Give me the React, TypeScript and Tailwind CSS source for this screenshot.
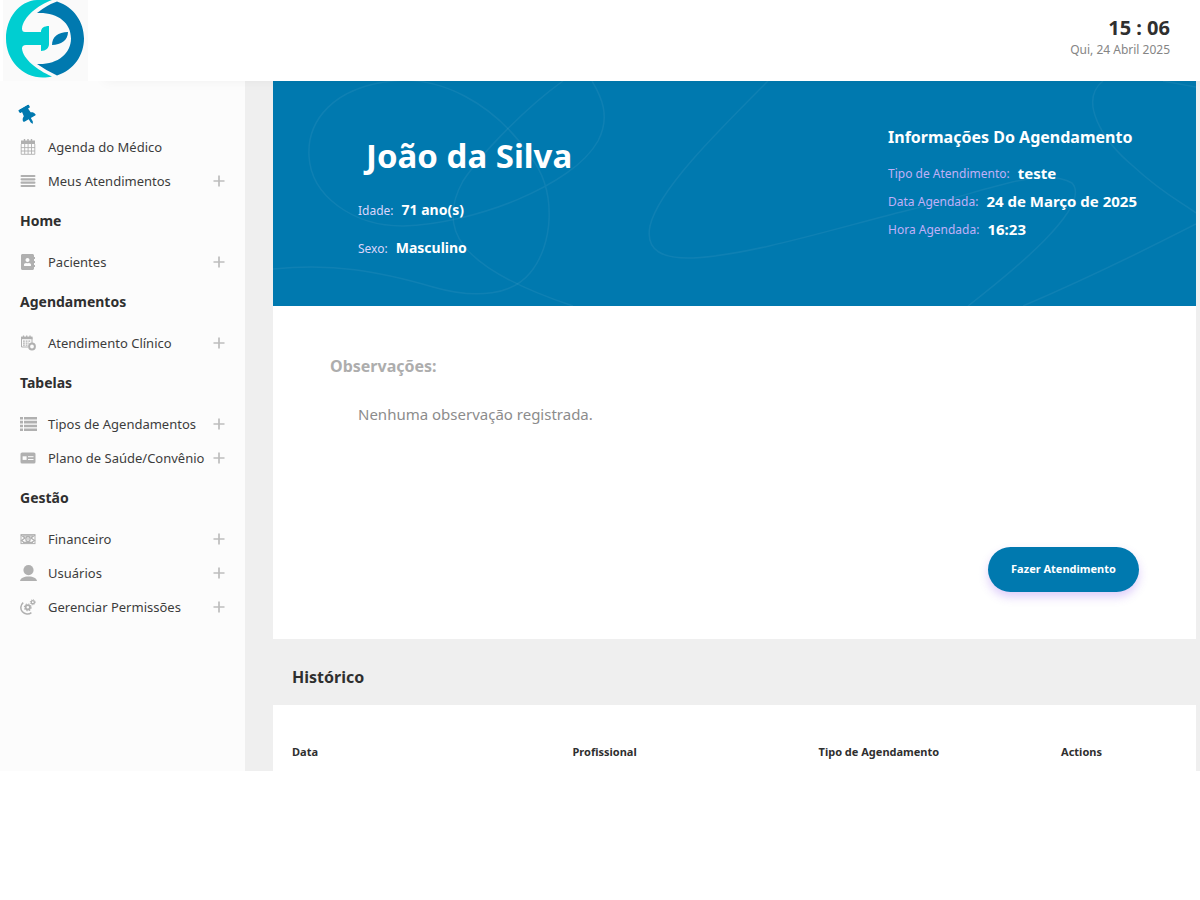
import React from 'react';
import { FaThumbtack, FaAddressBook } from 'react-icons/fa';

const iconClass = 'w-4 h-4 shrink-0 text-[#b0b0b0]';

function CalendarIcon() {
  return (
    <svg viewBox="0 0 16 16" className={iconClass} fill="none" stroke="currentColor">
      <path d="M1 1.5h14v3.5H1z" fill="currentColor" stroke="none" />
      <path d="M4.5 0v3M8 0v3M11.5 0v3" strokeWidth="1.4" />
      <path d="M1.2 5v10.3h13.6V5M1 8.6h14M1 12h14M4.7 5v10M8.1 5v10M11.5 5v10" strokeWidth="0.9" />
    </svg>
  );
}

function BarsIcon() {
  return (
    <svg viewBox="0 0 16 16" className={iconClass} stroke="currentColor" strokeWidth="2.2" strokeLinecap="round">
      <path d="M1.6 3h12.8M1.6 6.3h12.8M1.6 9.7h12.8M1.6 13h12.8" />
    </svg>
  );
}

function ClinicIcon() {
  return (
    <svg viewBox="0 0 16 16" className={iconClass} fill="none" stroke="currentColor">
      <path d="M8 12H1.5V2.5H12V8" strokeWidth="1" />
      <path d="M1 1.6h11.5v2.6H1z" fill="currentColor" stroke="none" />
      <path d="M3.5 0.6v2M6.7 0.6v2M10 0.6v2" strokeWidth="1.3" />
      <path d="M3 6.2h8M3 8.2h6M3 10.2h5" strokeWidth="1.3" strokeDasharray="1.8 0.9" />
      <circle cx="12" cy="11.5" r="2.9" strokeWidth="2" />
    </svg>
  );
}

function ListIcon() {
  return (
    <svg viewBox="0 0 17 16" className="w-[17px] h-4 shrink-0 text-[#b0b0b0]" stroke="currentColor" strokeWidth="2.6">
      <path d="M0 2.2h3M4 2.2h13M0 6.1h3M4 6.1h13M0 10h3M4 10h13M0 13.8h3M4 13.8h13" />
    </svg>
  );
}

function CardIcon() {
  return (
    <svg viewBox="0 0 16 16" className={iconClass}>
      <rect x="0.5" y="2.5" width="15" height="11" rx="1.6" fill="currentColor" />
      <path d="M2.6 6.3h4v3.6h-4z" fill="#fcfcfc" />
      <path d="M8 6.7h5.5M8 9.5h5.5" stroke="#fcfcfc" strokeWidth="1" />
    </svg>
  );
}

function MoneyIcon() {
  return (
    <svg viewBox="0 0 16 16" className={iconClass} fill="none" stroke="currentColor">
      <rect x="1" y="3.6" width="14" height="9" strokeWidth="1" />
      <path d="M1 4l4 3-3.5 2.5L5 12M15 4l-4 3 3.5 2.5L11 12M3 4.8h10M3 11.4h10" strokeWidth="1.3" />
      <ellipse cx="8" cy="8.1" rx="2.1" ry="2.6" strokeWidth="1.3" />
      <path d="M8 6.8v2.6" strokeWidth="1" />
    </svg>
  );
}

function UserIcon() {
  return (
    <svg viewBox="0 0 17 16" className="w-[17px] h-4 shrink-0 text-[#b0b0b0]" fill="currentColor">
      <circle cx="8.5" cy="5.1" r="5.1" />
      <path d="M0 16c0.6-3 3.6-4.6 8.5-4.6s7.9 1.6 8.5 4.6z" />
    </svg>
  );
}

function GearsIcon() {
  return (
    <svg viewBox="0 0 16 16" className={iconClass} fill="none" stroke="currentColor">
      <path d="M3.2 3.6C0.4 6 0 10.2 2.4 12.8c2.4 2.6 6.4 2.8 9 0.8" strokeWidth="1.5" />
      <circle cx="7.8" cy="8.3" r="2.2" strokeWidth="1.9" />
      <circle cx="7.8" cy="8.3" r="3.4" strokeWidth="1.1" strokeDasharray="1.3 1.37" />
      <circle cx="12.8" cy="3.2" r="1.6" strokeWidth="1.4" />
      <circle cx="12.8" cy="3.2" r="2.5" strokeWidth="1" strokeDasharray="1 0.96" />
    </svg>
  );
}

function PlusIcon() {
  return (
    <svg viewBox="0 0 12 12" className="w-3 h-3 ml-auto shrink-0 text-[#bdbdbd]" stroke="currentColor" strokeWidth="1.7">
      <path d="M6 0.5v11M0.5 6h11" />
    </svg>
  );
}

function Logo() {
  return (
    <svg viewBox="0 0 85 81" className="w-[85px] h-[81px]" role="img" aria-label="Logo">
      <rect width="85" height="81" fill="#fafafa" />
      <path
        d="M34 0C16 1 3 18 3 38.5C3 60 19 77.5 40 77.5C43 77.5 46 77.3 49 76.5C34 70 20 59 19 48.5Q19 45 23 45H38V51C43 51 46 48 46 44V26C41 26 38 28 38 32H22Q19 32 19 28.5C20 17 35 5 49 0Z"
        fill="#00ced1"
      />
      <path
        d="M54 1.5C71 7 81 22 81 38.5C81 55 71 70 54 75.5Q44 71 34 64C54 65 68 54 68 38.5C68 22 54 12 34 13Q44 5 54 1.5Z"
        fill="#0079af"
      />
      <path d="M49 45C49 37 55 32 65 32C65 40 58 45 49 45Z" fill="#0079af" />
    </svg>
  );
}

type Item = { label: string; icon: React.ReactNode; expandable?: boolean };
type Group = { title?: string; items: Item[] };

const groups: Group[] = [
  {
    items: [
      { label: 'Agenda do Médico', icon: <CalendarIcon /> },
      { label: 'Meus Atendimentos', icon: <BarsIcon />, expandable: true },
    ],
  },
  {
    title: 'Home',
    items: [{ label: 'Pacientes', icon: <FaAddressBook className={iconClass} />, expandable: true }],
  },
  {
    title: 'Agendamentos',
    items: [{ label: 'Atendimento Clínico', icon: <ClinicIcon />, expandable: true }],
  },
  {
    title: 'Tabelas',
    items: [
      { label: 'Tipos de Agendamentos', icon: <ListIcon />, expandable: true },
      { label: 'Plano de Saúde/Convênio', icon: <CardIcon />, expandable: true },
    ],
  },
  {
    title: 'Gestão',
    items: [
      { label: 'Financeiro', icon: <MoneyIcon />, expandable: true },
      { label: 'Usuários', icon: <UserIcon />, expandable: true },
      { label: 'Gerenciar Permissões', icon: <GearsIcon />, expandable: true },
    ],
  },
];

function Sidebar() {
  return (
    <aside className="w-[245px] shrink-0 bg-[#fcfcfc] px-5 pb-6">
      <div className="h-[49px] flex items-center pt-5">
        <button type="button" aria-label="Fixar menu" className="text-[#0079af]">
          <FaThumbtack className="w-4 h-[19px] -rotate-30" />
        </button>
      </div>
      <nav>
        {groups.map((group, i) => (
          <div key={i}>
            {group.title && (
              <h2 className="h-[47px] flex items-center pb-0.5 text-sm font-bold text-[#2f2f2f]">{group.title}</h2>
            )}
            <ul>
              {group.items.map((item) => (
                <li key={item.label}>
                  <a href="#" className="h-[34px] flex items-center text-[13px] text-[#3c3c3c] whitespace-nowrap">
                    <span className="w-7 shrink-0">{item.icon}</span>
                    <span className="pt-0.5">{item.label}</span>
                    {item.expandable && <PlusIcon />}
                  </a>
                </li>
              ))}
            </ul>
          </div>
        ))}
      </nav>
    </aside>
  );
}

function Info({ label, value }: { label: string; value: string }) {
  return (
    <p className="h-7 flex items-center gap-2 whitespace-nowrap">
      <span className="pt-0.5 text-xs text-[#c0b0f8]">{label}</span>
      <strong className="text-[15px]">{value}</strong>
    </p>
  );
}

function PatientField({ label, value }: { label: string; value: string }) {
  return (
    <p className="h-[38px] flex items-center gap-2">
      <span className="pt-0.5 text-xs text-[#dcd5fb]">{label}</span>
      <strong className="text-sm">{value}</strong>
    </p>
  );
}

function Hero() {
  return (
    <section className="relative h-[225px] bg-[#0079af] text-white overflow-hidden">
      {/* Background curves */}
      <svg
        viewBox="0 0 923 225"
        preserveAspectRatio="none"
        className="absolute inset-0 w-full h-full"
        fill="none"
        stroke="#ffffff"
        strokeOpacity="0.06"
        strokeWidth="1.5"
      >
        <path d="M0 188C60 182 105 190 160 206C205 219 240 213 257 192C280 165 285 110 257 75C220 20 165 -5 120 0C60 6 34 40 36 75C38 115 80 145 130 145C200 143 300 105 325 60C338 35 328 15 319 0" />
        <path d="M290 0C255 25 210 70 190 100C165 145 180 185 300 225" />
        <path d="M495 0C440 55 385 110 377 145C372 170 390 178 420 177C480 174 570 145 640 128C720 108 770 85 799 102C820 125 740 190 695 225" />
        <path d="M830 0C805 20 830 60 860 85C890 113 910 122 923 132M890 0L923 6" />
        <path d="M750 225C820 195 880 165 923 143" />
      </svg>
      <div className="relative flex justify-between pr-[59px]">
        <div className="pl-[85px] pt-[52px]">
          <h1 className="pl-2 mb-3 text-[33px] leading-[46px] font-bold">João da Silva</h1>
          <PatientField label="Idade:" value="71 ano(s)" />
          <PatientField label="Sexo:" value="Masculino" />
        </div>
        <div className="pt-11">
          <h2 className="h-[34px] text-base leading-6 font-bold whitespace-nowrap">Informações Do Agendamento</h2>
          <Info label="Tipo de Atendimento:" value="teste" />
          <Info label="Data Agendada:" value="24 de Março de 2025" />
          <Info label="Hora Agendada:" value="16:23" />
        </div>
      </div>
    </section>
  );
}

export default function App() {
  return (
    <div className="bg-white font-['Noto_Sans','Open_Sans',sans-serif] text-[#2f2f2f]">
      <header className="relative z-10 h-[81px] flex bg-white">
        <div className="relative z-10 w-[88px] pl-[3px] shrink-0 bg-white">
          <Logo />
        </div>
        <div className="grow flex flex-col items-end pt-4 pr-[30px] bg-white shadow-[16px_0_12px_rgba(0,0,0,0.05)]">
          <time className="text-xl leading-6 font-bold">15 : 06</time>
          <span className="text-xs leading-5 text-[#858585]">Qui, 24 Abril 2025</span>
        </div>
      </header>

      <div className="flex">
        <Sidebar />
        <main className="grow min-w-0 bg-[#efefef] pl-7 pr-1">
          <Hero />

          <section className="h-[333px] bg-white flex flex-col items-start pt-12 px-[57px] pb-[47px]">
            <h2 className="text-base leading-6 font-bold text-[#adadad]">Observações:</h2>
            <p className="pl-7 mt-6 text-[15px] leading-6 text-[#8c8c8c]">Nenhuma observação registrada.</p>
            <button
              type="button"
              className="mt-auto ml-auto h-[45px] w-[151px] rounded-full bg-[#0079af] text-[11px] font-bold text-white shadow-[0_5px_10px_rgba(124,58,237,0.25)]"
            >
              Fazer Atendimento
            </button>
          </section>

          <h2 className="h-[66px] flex items-center pt-2.5 pl-[19px] text-base font-bold">Histórico</h2>

          <section className="bg-white h-[66px] px-[19px] pt-[37px]">
            <table className="w-full table-fixed text-left text-[11px] leading-5">
              <thead>
                <tr>
                  <th className="w-[31.7%] font-bold">Data</th>
                  <th className="w-[27.8%] font-bold">Profissional</th>
                  <th className="w-[27.4%] font-bold">Tipo de Agendamento</th>
                  <th className="font-bold">Actions</th>
                </tr>
              </thead>
            </table>
          </section>
        </main>
      </div>
    </div>
  );
}
